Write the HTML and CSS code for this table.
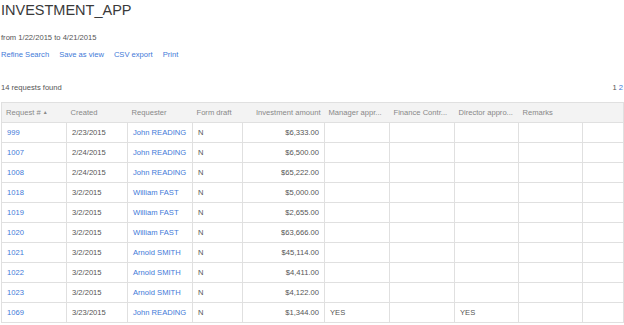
FILE: index.html
```html
<!DOCTYPE html>
<html lang="en">
<head>
    <meta charset="UTF-8">
    <title>INVESTMENT_APP - Requests</title>
    <link rel="stylesheet" href="styles.css">
</head>
<body>
    <h1 class="app-title">INVESTMENT_APP</h1>

    <div class="period">from 1/22/2015 to 4/21/2015</div>

    <div class="actions">
        <a href="#">Refine Search</a>
        <a href="#">Save as view</a>
        <a href="#">CSV export</a>
        <a href="#">Print</a>
    </div>

    <div class="result-bar">
        <span>14 requests found</span>
        <span class="pager"><span class="current">1</span> <a href="#">2</a></span>
    </div>

    <table class="requests">
        <colgroup>
            <col class="c-id">
            <col class="c-created">
            <col class="c-requester">
            <col class="c-draft">
            <col class="c-amount">
            <col class="c-appr">
            <col class="c-appr">
            <col class="c-appr2">
            <col class="c-remarks">
            <col class="c-extra">
        </colgroup>
        <thead>
            <tr>
                <th>Request # <span class="sort">&#9650;</span></th>
                <th>Created</th>
                <th>Requester</th>
                <th>Form draft</th>
                <th class="num">Investment amount</th>
                <th>Manager appr...</th>
                <th>Finance Contr...</th>
                <th>Director appro...</th>
                <th>Remarks</th>
                <th></th>
            </tr>
        </thead>
        <tbody>
            <tr><td><a href="#">999</a></td><td>2/23/2015</td><td><a href="#">John READING</a></td><td>N</td><td class="num">$6,333.00</td><td></td><td></td><td></td><td></td><td></td></tr>
            <tr><td><a href="#">1007</a></td><td>2/24/2015</td><td><a href="#">John READING</a></td><td>N</td><td class="num">$6,500.00</td><td></td><td></td><td></td><td></td><td></td></tr>
            <tr><td><a href="#">1008</a></td><td>2/24/2015</td><td><a href="#">John READING</a></td><td>N</td><td class="num">$65,222.00</td><td></td><td></td><td></td><td></td><td></td></tr>
            <tr><td><a href="#">1018</a></td><td>3/2/2015</td><td><a href="#">William FAST</a></td><td>N</td><td class="num">$5,000.00</td><td></td><td></td><td></td><td></td><td></td></tr>
            <tr><td><a href="#">1019</a></td><td>3/2/2015</td><td><a href="#">William FAST</a></td><td>N</td><td class="num">$2,655.00</td><td></td><td></td><td></td><td></td><td></td></tr>
            <tr><td><a href="#">1020</a></td><td>3/2/2015</td><td><a href="#">William FAST</a></td><td>N</td><td class="num">$63,666.00</td><td></td><td></td><td></td><td></td><td></td></tr>
            <tr><td><a href="#">1021</a></td><td>3/2/2015</td><td><a href="#">Arnold SMITH</a></td><td>N</td><td class="num">$45,114.00</td><td></td><td></td><td></td><td></td><td></td></tr>
            <tr><td><a href="#">1022</a></td><td>3/2/2015</td><td><a href="#">Arnold SMITH</a></td><td>N</td><td class="num">$4,411.00</td><td></td><td></td><td></td><td></td><td></td></tr>
            <tr><td><a href="#">1023</a></td><td>3/2/2015</td><td><a href="#">Arnold SMITH</a></td><td>N</td><td class="num">$4,122.00</td><td></td><td></td><td></td><td></td><td></td></tr>
            <tr><td><a href="#">1069</a></td><td>3/23/2015</td><td><a href="#">John READING</a></td><td>N</td><td class="num">$1,344.00</td><td>YES</td><td></td><td>YES</td><td></td><td></td></tr>
        </tbody>
    </table>
</body>
</html>
```

FILE: styles.css
```css
:root {
    --text-color: #555;
    --muted-color: #888;
    --link-color: #4279d8;
    --border-color: #e0e0e0;
    --head-bg: #f3f3f3;
}

* {
    box-sizing: border-box;
    margin: 0;
    padding: 0;
}

body {
    font-family: "Liberation Sans", Arial, sans-serif;
    font-size: 7.6px;
    color: var(--text-color);
    background: #fff;
    padding: 0 1px;
}

a {
    color: var(--link-color);
    text-decoration: none;
}

.app-title {
    font-size: 14.5px;
    font-weight: normal;
    line-height: 16px;
    margin-top: 2px;
    color: #3a3a3a;
}

.period {
    line-height: 10px;
    margin-top: 15px;
}

.actions {
    display: flex;
    gap: 10px;
    line-height: 10px;
    margin-top: 7px;
}

.result-bar {
    display: flex;
    justify-content: space-between;
    line-height: 10px;
    margin-top: 23px;
}

.pager .current {
    color: var(--text-color);
}

.requests {
    width: 622px;
    table-layout: fixed;
    border-collapse: collapse;
    margin-top: 9px;
    border: 1px solid var(--border-color);
}

.c-id { width: 65px; }
.c-created { width: 61px; }
.c-requester { width: 65px; }
.c-draft { width: 50px; }
.c-amount { width: 82px; }
.c-appr { width: 65px; }
.c-appr2 { width: 64px; }
.c-remarks { width: 64px; }
.c-extra { width: 41px; }

.requests th {
    background-color: var(--head-bg);
    color: var(--muted-color);
    font-weight: normal;
    text-align: left;
    height: 20px;
    padding: 0 4px;
    white-space: nowrap;
    overflow: hidden;
    border-bottom: 1px solid var(--border-color);
}

.requests td {
    height: 20px;
    padding: 0 5px;
    white-space: nowrap;
    overflow: hidden;
    border: 1px solid var(--border-color);
}

.requests .num {
    text-align: right;
}

.sort {
    font-size: 5px;
    vertical-align: 1px;
}
```
